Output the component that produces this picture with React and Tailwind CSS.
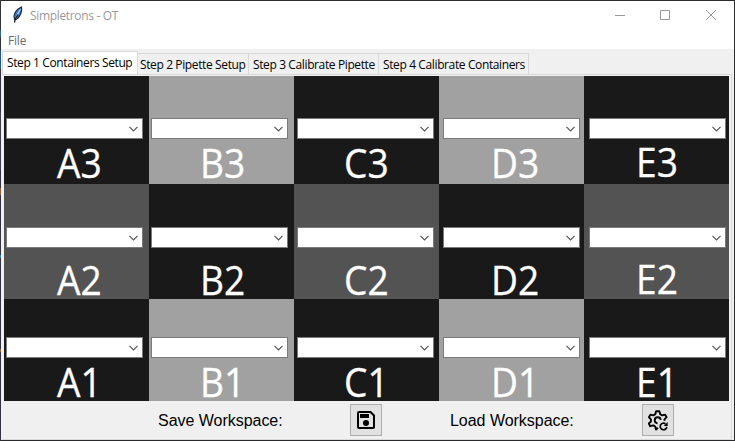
import React from "react";

const UI = "font-['Open_Sans','Noto_Sans',sans-serif]";

const ROWS = [
  {
    height: "h-[108px]",
    combo: "pt-[42px]",
    label: "mt-[5px]",
    lastLabel: "mt-[4px]",
    cells: [
      ["A3", "bg-[#191919]"],
      ["B3", "bg-[#a1a1a1]"],
      ["C3", "bg-[#191919]"],
      ["D3", "bg-[#a1a1a1]"],
      ["E3", "bg-[#191919]"],
    ],
  },
  {
    height: "h-[115px]",
    combo: "pt-[43px]",
    label: "mt-[13px]",
    lastLabel: "mt-[12px]",
    cells: [
      ["A2", "bg-[#535353]"],
      ["B2", "bg-[#191919]"],
      ["C2", "bg-[#535353]"],
      ["D2", "bg-[#191919]"],
      ["E2", "bg-[#535353]"],
    ],
  },
  {
    height: "h-[102px]",
    combo: "pt-[38px]",
    label: "mt-[5px]",
    lastLabel: "mt-[5px]",
    cells: [
      ["A1", "bg-[#191919]"],
      ["B1", "bg-[#a1a1a1]"],
      ["C1", "bg-[#191919]"],
      ["D1", "bg-[#a1a1a1]"],
      ["E1", "bg-[#191919]"],
    ],
  },
];

const COMBO_LEFT = ["ml-[2px]", "ml-[2px]", "ml-[3px]", "ml-[4px]", "ml-[5px]"];
const LABEL_LEFT = ["ml-[53px]", "ml-[51px]", "ml-[50px]", "ml-[52px]", "ml-[52px]"];

function Feather() {
  return (
    <svg width="12" height="18" viewBox="0 0 12 18" className="ml-[10px] mt-[5px]">
      <path d="M2.5 13.5C.8 9 3.500 3.500 9.500 1c1 4-1 10-5.500 12.500z" fill="#3f78c4" stroke="#18222f" strokeWidth="1.1" />
      <path d="M8.500 3C7 6 5 9 3.400 13" stroke="#a9d0f5" strokeWidth="1.2" fill="none" />
      <path d="M6 8.500L3.300 13l-.8 3.500" stroke="#111" strokeWidth="1.2" fill="none" />
    </svg>
  );
}

function Combo({ left }) {
  return (
    <div className={`${left} flex h-[21px] w-[137px] shrink-0 items-center justify-end border border-[#7a7a7a] bg-white pr-1`}>
      <svg width="9" height="6" viewBox="0 0 9 6" fill="none" stroke="#555" strokeWidth="1.2">
        <path d="M.5 .8l4 4 4-4" />
      </svg>
    </div>
  );
}

function SaveIcon() {
  return (
    <svg width="18" height="18" viewBox="0 0 18 18">
      <path d="M2 1h11.500L17 4.500V16a1 1 0 0 1-1 1H2a1 1 0 0 1-1-1V2a1 1 0 0 1 1-1z" fill="none" stroke="#000" strokeWidth="2" />
      <path d="M3 3h9v4H3z" />
      <circle cx="9" cy="12" r="3" />
    </svg>
  );
}

function LoadIcon() {
  return (
    <svg width="20" height="21" viewBox="0 0 20 21" fill="none" stroke="#000" strokeWidth="1.9">
      <path d="M10 17.800L8 19.500l-.8-3-2-1.100-3 .8-1.400-2.700 2.100-2v-2.200L.9 7.200l1.500-2.600 2.900.8 2-1.200.8-3h3.300l.8 3 2 1.200 2.900-.8 1.500 2.600-2.100 2.100v1.500" strokeLinejoin="round" />
      <path d="M12.700 9.800A3 3 0 1 0 9.500 13.200" />
      <path d="M17.500 13.800a3.300 3.300 0 1 0 1.300 3" strokeWidth="1.700" />
      <path d="M19.700 12v4h-4z" fill="#000" stroke="none" />
    </svg>
  );
}

function ToolButton({ children }) {
  return (
    <button className="flex size-8 items-center justify-center border border-[#adadad] bg-[#e1e1e1]">{children}</button>
  );
}

function Tab({ width, children }) {
  return (
    <div className={`${width} h-[21px] border-r border-t border-[#d9d9d9] text-[12px] leading-[22px]`}>
      <span className="block whitespace-nowrap tracking-[-0.38px]">{children}</span>
    </div>
  );
}

export default function App() {
  return (
    <div className={`flex h-[441px] w-[735px] overflow-hidden bg-[#2b2b2f] ${UI}`}>
      <div className="flex w-px shrink-0 flex-col bg-[#34333b]">
        <div className="mt-[30px] h-[7px] bg-[#2d638e]" />
        <div className="mt-[14px] h-[18px] bg-[#245580]" />
        <div className="mt-[43px] h-[58px] bg-[#41404a]" />
        <div className="mt-[18px] h-[7px] bg-[#8a623e]" />
        <div className="mt-[60px] h-[3px] bg-[#397ba8]" />
        <div className="mt-[91px] h-[3px] bg-[#8a623e]" />
      </div>
      <div className="mb-px mr-px mt-px flex w-[733px] flex-col bg-[#f0f0f0] pl-px text-black">
        <header className="-ml-px flex h-[30px] shrink-0 bg-white pl-px">
          <Feather />
          <span className="ml-[6px] w-[100px] whitespace-nowrap text-[12px] leading-[30px] tracking-[-0.33px] text-[#999]">Simpletrons - OT</span>
          <svg className="ml-auto mr-[14px] mt-[8px]" width="106" height="13" viewBox="0 0 106 13" fill="none" stroke="#999">
            <path d="M1 6.500h10M46.500 1.500h9v9h-9zM92 1l10 10M102 1L92 11" />
          </svg>
        </header>
        <nav className="-ml-px h-[18px] shrink-0 bg-white pl-[7px] text-[12px] leading-[19px] tracking-[-0.2px] text-[#6d6d6d]">File</nav>
        <div className="flex h-[25px] shrink-0 items-end">
          <div className="h-[23px] w-[136px] border border-b-0 border-[#d9d9d9] bg-white pl-[4px] text-[12px] leading-[22px]">
            <span className="block whitespace-nowrap tracking-[-0.39px]">Step 1 Containers Setup</span>
          </div>
          <Tab width="w-[111px] pl-[2px]">Step 2 Pipette Setup</Tab>
          <Tab width="w-[130px] pl-[4px]">Step 3 Calibrate Pipette</Tab>
          <Tab width="w-[150px] pl-[4px]">Step 4 Calibrate Containers</Tab>
        </div>
        <main className="mr-[2px] flex h-[366px] shrink-0 flex-col border-b border-r border-t border-[#d9d9d9] pl-[2px] pt-px">
          {ROWS.map((row, r) => (
            <div key={r} className={`${row.height} flex shrink-0`}>
              {row.cells.map(([name, bg], c) => (
                <div key={name} className={`${bg} ${row.combo} flex w-[145px] shrink-0 flex-col`}>
                  <Combo left={COMBO_LEFT[c]} />
                  <div className={`${c === 4 ? row.lastLabel : row.label} ${LABEL_LEFT[c]} origin-left scale-x-[0.94] text-[39.5px] leading-[38px] text-white [-webkit-text-stroke:0.3px_white]`}>{name}</div>
                </div>
              ))}
            </div>
          ))}
          <footer className="flex h-[38px] shrink-0 items-center font-['Liberation_Sans',Arial,sans-serif] text-[16px] tracking-[-0.03px]">
            <span className="ml-[154px] w-[192px] whitespace-nowrap pt-[2px]">Save Workspace:</span>
            <ToolButton><SaveIcon /></ToolButton>
            <span className="ml-[68px] w-[192px] whitespace-nowrap pt-[2px]">Load Workspace:</span>
            <ToolButton><LoadIcon /></ToolButton>
          </footer>
        </main>
      </div>
    </div>
  );
}
